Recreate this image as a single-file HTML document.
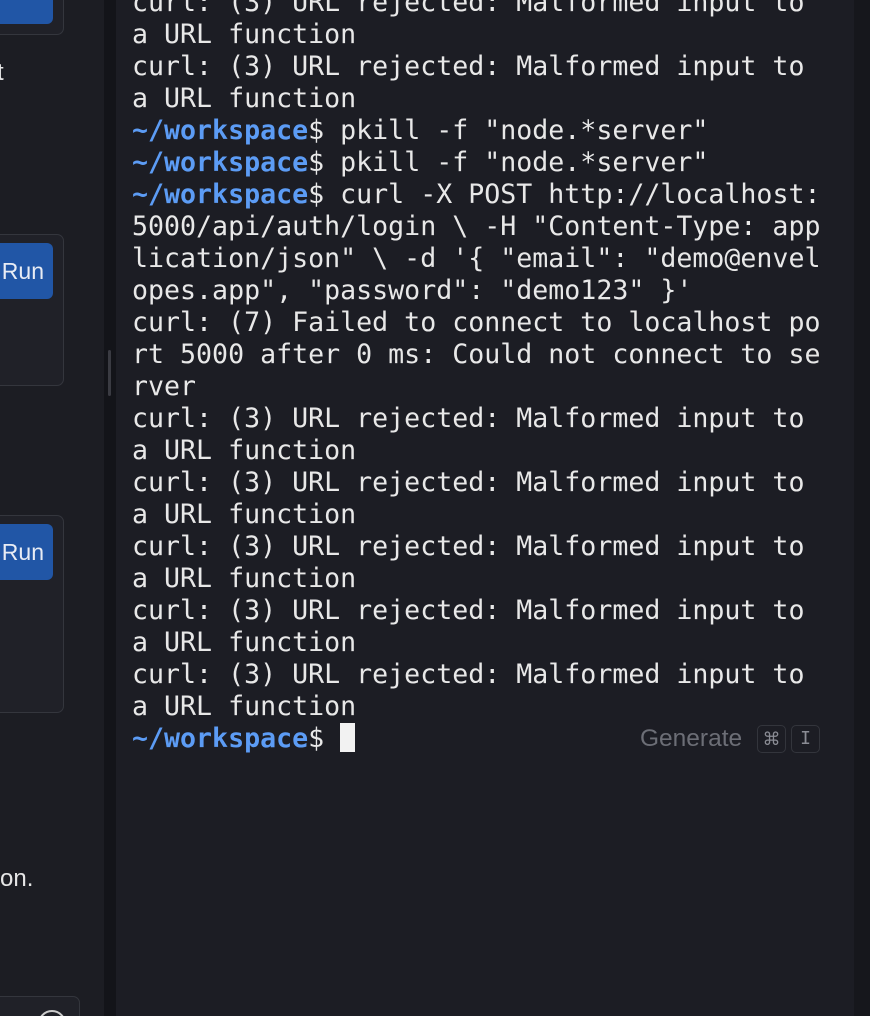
<!DOCTYPE html>
<html><head><style>
html{overflow:hidden;height:1016px}
body{margin:0;width:870px;height:1016px;overflow:hidden;background:#1c1d23;position:relative;font-family:"Liberation Sans",sans-serif}
.left{position:absolute;left:0;top:0;width:104px;height:1016px;background:#1c1d23;overflow:hidden}
.sep{position:absolute;left:104px;top:0;width:12px;height:1016px;background:#131419}
.term{position:absolute;left:116px;top:0;width:738px;height:1016px;background:#1c1d24}
.rs{position:absolute;left:854px;top:0;width:16px;height:1016px;background:#16171c}
.card{position:absolute;left:-10px;border:1.5px solid #34363d;border-radius:7px;background:#202128}
.btn{position:absolute;left:-10px;width:63px;background:#2156a6;border-radius:6px;color:#e8ecf4;font-size:23px;line-height:56px}
.btn span{position:absolute;right:9px}
.txt{position:absolute;color:#e6e6e6;font-size:24px}
pre{position:absolute;left:132px;top:-13px;margin:0;font-family:"DejaVu Sans Mono","Liberation Mono",monospace;font-size:26.6px;line-height:32px;color:#e8e8e8}
.p{color:#5c9cf5;font-weight:bold}
.cur{display:inline-block;width:15px;height:29px;background:#f2f2f2;vertical-align:-5px}
.gen{position:absolute;left:640px;top:725px;color:#6c6e76;font-size:24.5px}
.k{position:absolute;top:725px;height:26px;border:1.5px solid #33353c;border-radius:5px;color:#8a8c94;font-size:18px;text-align:center;line-height:26px}
</style></head><body>
<div class="left">
<div class="card" style="top:-20px;width:72px;height:53px"></div>
<div class="btn" style="top:-22px;height:46px"><span style="top:-18px">Run</span></div>
<div class="txt" style="left:-3px;top:59px">t</div>
<div class="card" style="top:234px;width:72px;height:150px"></div>
<div class="btn" style="top:243px;height:56px"><span>Run</span></div>
<div class="card" style="top:515px;width:72px;height:196px"></div>
<div class="btn" style="top:524px;height:56px"><span>Run</span></div>
<div class="txt" style="left:0;top:865px">on.</div>
<div class="card" style="top:996px;width:88px;height:40px"></div>
<div style="position:absolute;left:38px;top:1010px;width:24px;height:24px;border:2px solid #ccc;border-radius:50%"></div>
</div>
<div class="sep"><div style="position:absolute;left:4px;top:350px;width:3px;height:46px;background:#3a3b42;border-radius:2px"></div></div>
<div class="term"></div>
<div class="rs"></div>
<pre>curl: (3) URL rejected: Malformed input to
a URL function
curl: (3) URL rejected: Malformed input to
a URL function
<span class="p">~/workspace</span>$ pkill -f "node.*server"
<span class="p">~/workspace</span>$ pkill -f "node.*server"
<span class="p">~/workspace</span>$ curl -X POST http://localhost:
5000/api/auth/login \ -H "Content-Type: app
lication/json" \ -d '{ "email": "demo@envel
opes.app", "password": "demo123" }'
curl: (7) Failed to connect to localhost po
rt 5000 after 0 ms: Could not connect to se
rver
curl: (3) URL rejected: Malformed input to
a URL function
curl: (3) URL rejected: Malformed input to
a URL function
curl: (3) URL rejected: Malformed input to
a URL function
curl: (3) URL rejected: Malformed input to
a URL function
curl: (3) URL rejected: Malformed input to
a URL function
<span class="p">~/workspace</span>$ <span class="cur"></span></pre>
<div class="gen">Generate</div>
<div class="k" style="left:757px;width:27px">⌘</div>
<div class="k" style="left:791px;width:27px;font-family:'DejaVu Sans Mono',monospace">I</div>
</body></html>
